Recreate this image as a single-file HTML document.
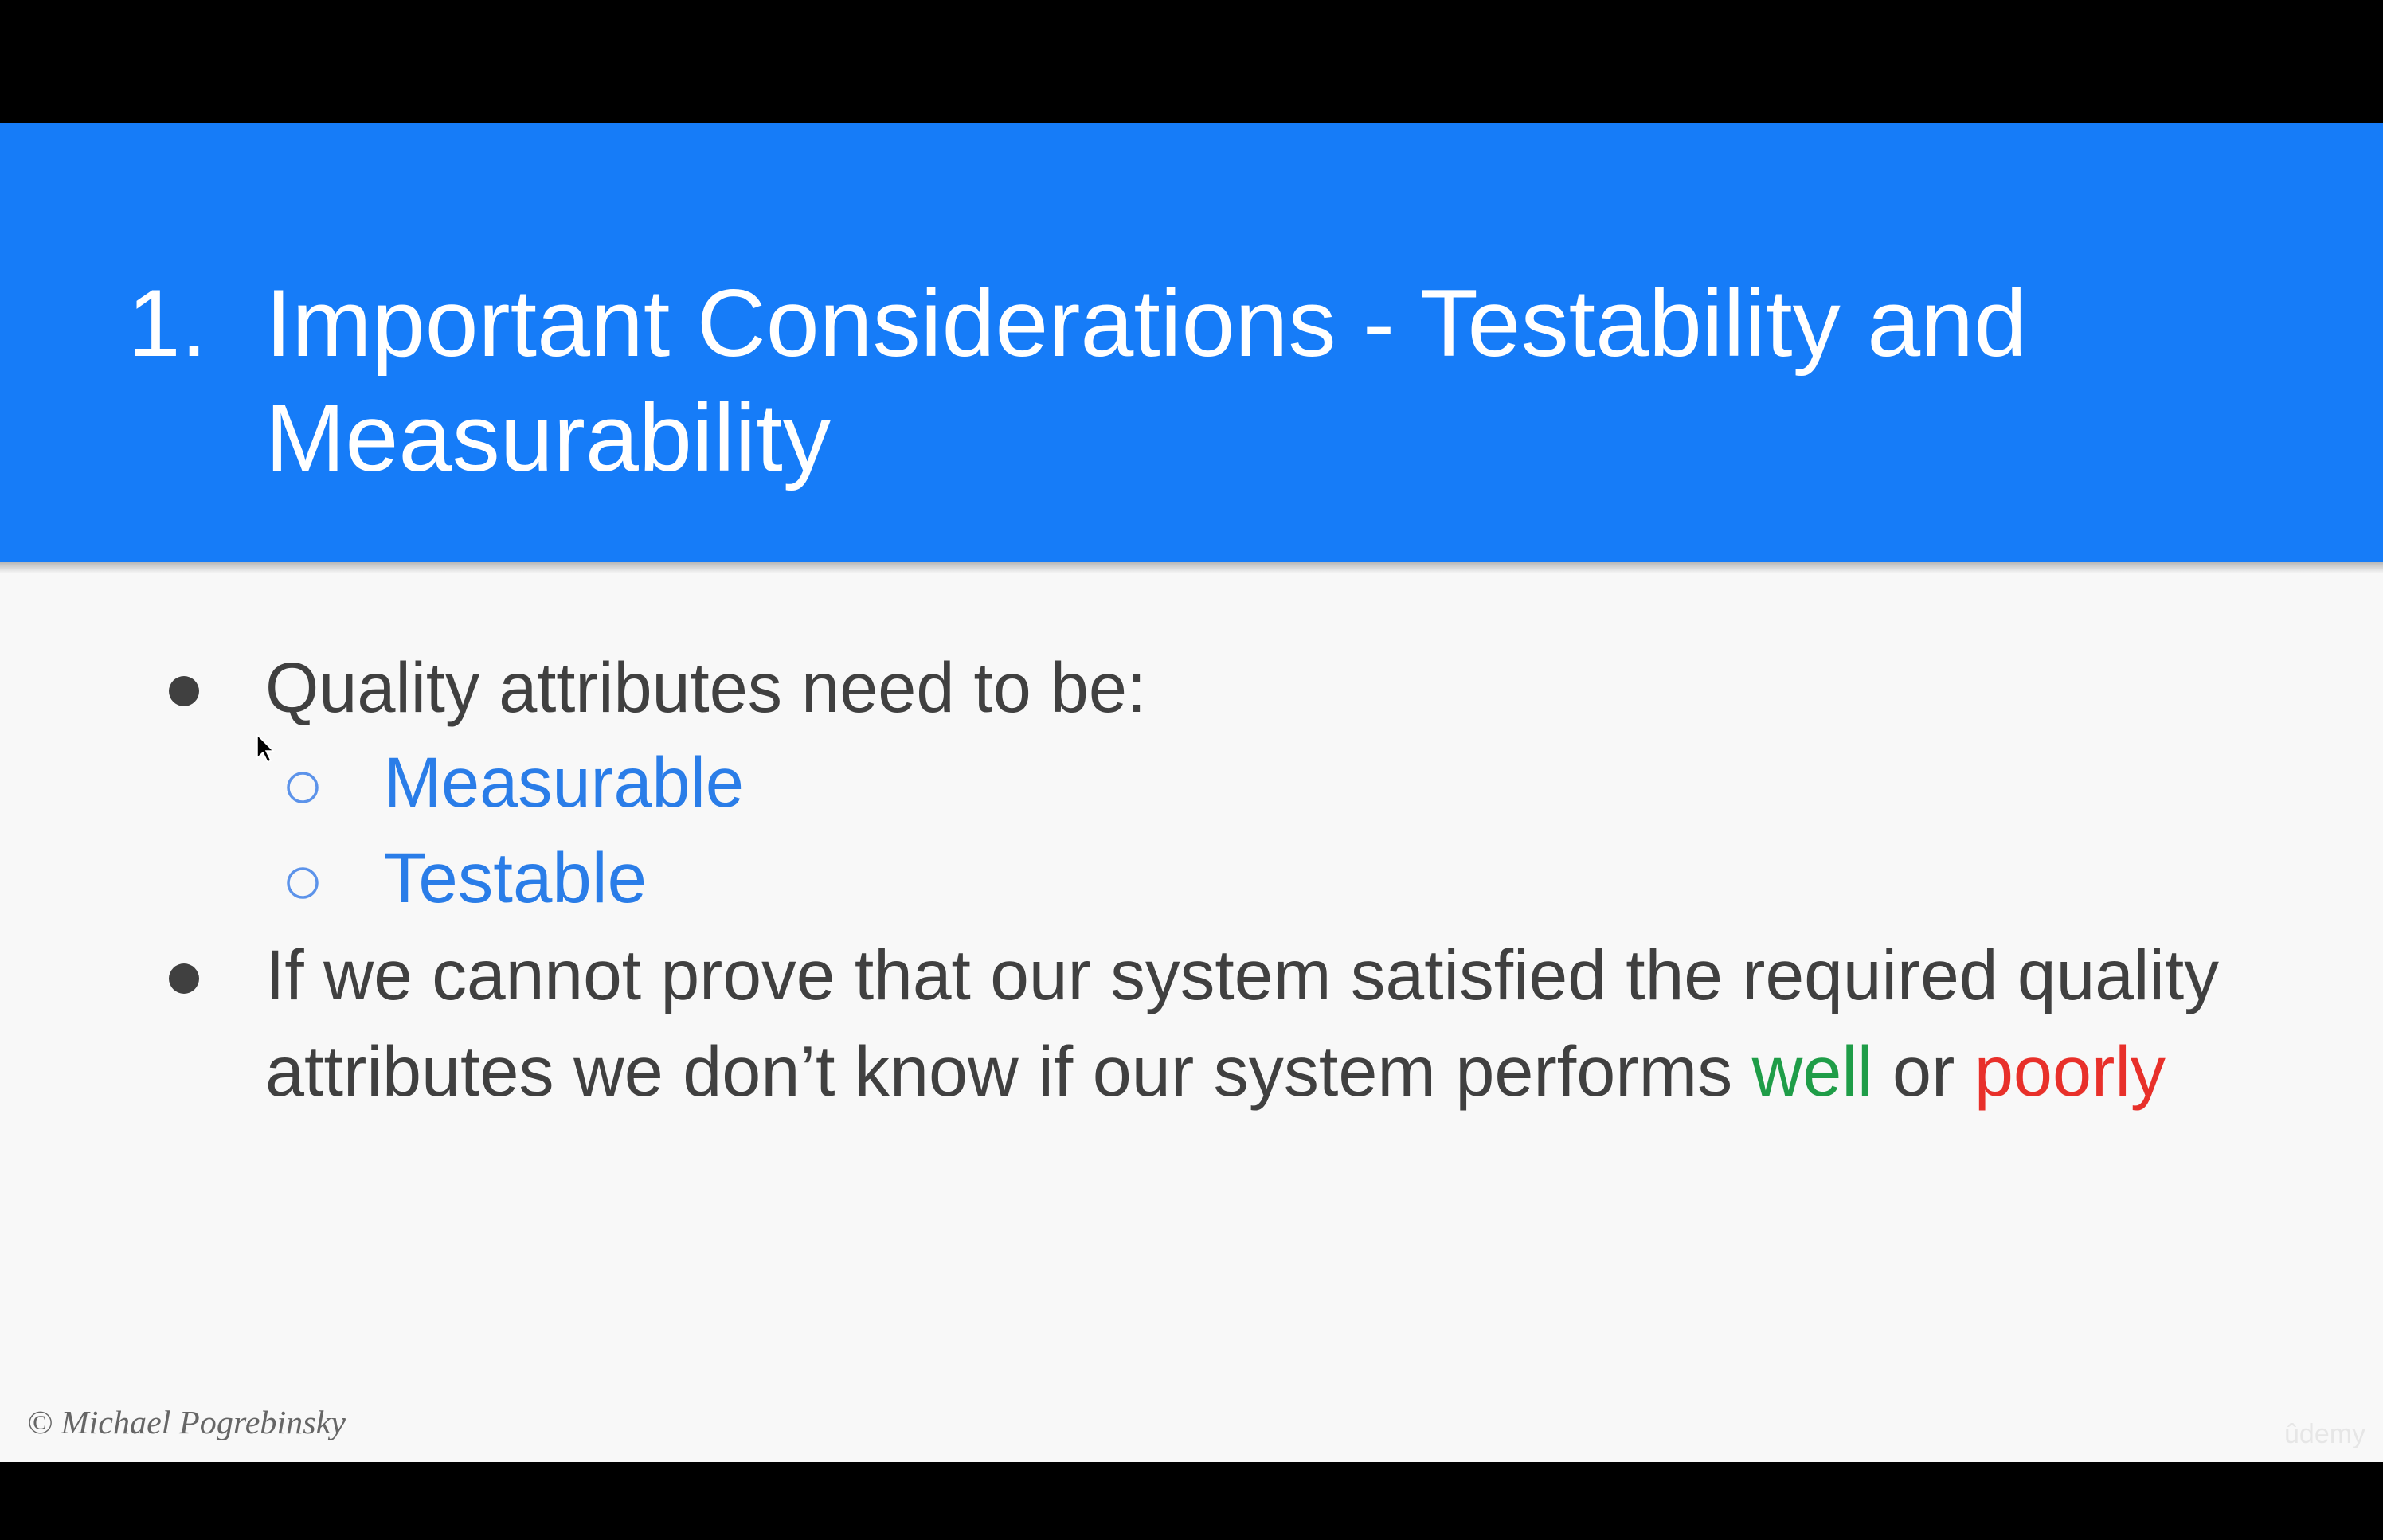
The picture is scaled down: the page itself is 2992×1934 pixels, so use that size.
<!DOCTYPE html>
<html><head><meta charset="utf-8"><style>
html,body{margin:0;padding:0;background:#000;}
body{width:2992px;height:1934px;position:relative;overflow:hidden;}
svg{position:absolute;left:0;top:0;}
</style></head><body>
<svg width="2992" height="1934" viewBox="0 0 2992 1934" xmlns="http://www.w3.org/2000/svg">
<defs><linearGradient id="sh" x1="0" y1="0" x2="0" y2="1"><stop offset="0" stop-color="#b8b8b8"/><stop offset="1" stop-color="#f8f8f8"/></linearGradient></defs>
<rect x="0" y="0" width="2992" height="1934" fill="#000"/>
<rect x="0" y="155" width="2992" height="1681" fill="#f8f8f8"/>
<rect x="0" y="706" width="2992" height="14" fill="url(#sh)"/>
<rect x="0" y="155" width="2992" height="551" fill="#167cf8"/>
<g font-family="Liberation Sans, sans-serif" fill="#fff" font-size="120">
<text x="160" y="447">1.</text>
<text x="333" y="447" textLength="2212" lengthAdjust="spacingAndGlyphs">Important Considerations - Testability and</text>
<text x="333" y="591" textLength="710" lengthAdjust="spacingAndGlyphs">Measurability</text>
</g>
<g font-family="Liberation Sans, sans-serif" font-size="89" fill="#404040">
<circle cx="231" cy="868" r="19" fill="#404040"/>
<text x="333" y="894" textLength="1106" lengthAdjust="spacingAndGlyphs">Quality attributes need to be:</text>
<circle cx="380" cy="989" r="18" fill="none" stroke="#5c93ea" stroke-width="3.5"/>
<text x="482" y="1013" fill="#2a7de8" textLength="452" lengthAdjust="spacingAndGlyphs">Measurable</text>
<circle cx="380" cy="1109" r="18" fill="none" stroke="#5c93ea" stroke-width="3.5"/>
<text x="481" y="1133" fill="#2a7de8" textLength="331" lengthAdjust="spacingAndGlyphs">Testable</text>
<circle cx="231" cy="1229" r="19" fill="#404040"/>
<text x="333" y="1255" textLength="2453" lengthAdjust="spacingAndGlyphs">If we cannot prove that our system satisfied the required quality</text>
<text x="333" y="1376" textLength="2386" lengthAdjust="spacingAndGlyphs">attributes we don’t know if our system performs <tspan fill="#1f9d48">well</tspan> or <tspan fill="#e8302a">poorly</tspan></text>
</g>
<path d="M323 923 L323 952 L330 945 L336 957 L340 955 L334 943 L343 943 Z" fill="#000" stroke="#fff" stroke-width="1.5"/>
<text x="34" y="1800" font-family="Liberation Serif, serif" font-style="italic" font-size="41" fill="#666" textLength="400" lengthAdjust="spacingAndGlyphs">© Michael Pogrebinsky</text>
<text x="2868" y="1812" font-family="Liberation Sans, sans-serif" font-size="34" fill="#e6e6e6">ûdemy</text>
</svg>
</body></html>
